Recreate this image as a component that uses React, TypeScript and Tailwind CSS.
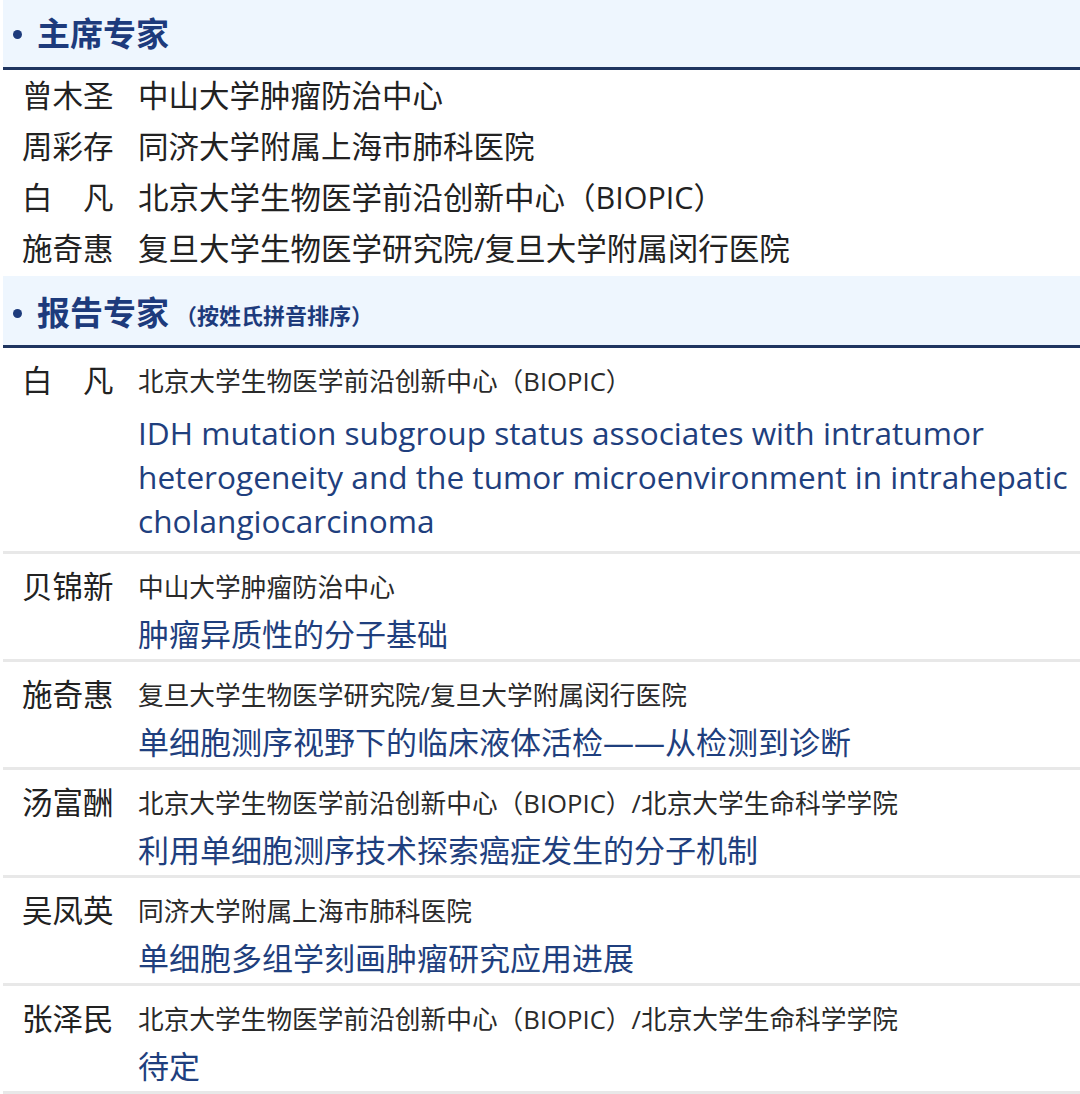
import React from "react";

const chairs = [
  { name: "曾木圣", org: "中山大学肿瘤防治中心" },
  { name: "周彩存", org: "同济大学附属上海市肺科医院" },
  { name: "白　凡", org: "北京大学生物医学前沿创新中心（BIOPIC）" },
  { name: "施奇惠", org: "复旦大学生物医学研究院/复旦大学附属闵行医院" },
];

const speakers: { name: string; org: string; title: string[]; en?: boolean }[] = [
  {
    name: "白　凡",
    org: "北京大学生物医学前沿创新中心（BIOPIC）",
    title: [
      "IDH mutation subgroup status associates with intratumor",
      "heterogeneity and the tumor microenvironment in intrahepatic",
      "cholangiocarcinoma",
    ],
    en: true,
  },
  { name: "贝锦新", org: "中山大学肿瘤防治中心", title: ["肿瘤异质性的分子基础"] },
  {
    name: "施奇惠",
    org: "复旦大学生物医学研究院/复旦大学附属闵行医院",
    title: ["单细胞测序视野下的临床液体活检——从检测到诊断"],
  },
  {
    name: "汤富酬",
    org: "北京大学生物医学前沿创新中心（BIOPIC）/北京大学生命科学学院",
    title: ["利用单细胞测序技术探索癌症发生的分子机制"],
  },
  { name: "吴凤英", org: "同济大学附属上海市肺科医院", title: ["单细胞多组学刻画肿瘤研究应用进展"] },
  {
    name: "张泽民",
    org: "北京大学生物医学前沿创新中心（BIOPIC）/北京大学生命科学学院",
    title: ["待定"],
  },
];

function SectionHeader({ title, note, h }: { title: string; note?: string; h: string }) {
  return (
    <div className="ml-[3px]">
      <div className={`${h} bg-[#eef6fe] flex items-center pl-[10px] text-[#1d3b7c] font-bold`}>
        <span className="w-[9px] h-[9px] rounded-full bg-[#1d3b7c] mr-[15px] mt-[2px]" />
        <span className="text-[33px] leading-none">{title}</span>
        {note && <span className="ml-[6px] text-[22px] mt-[6px]">{note}</span>}
      </div>
      <div className="h-[3px] bg-[#1f3560]" />
    </div>
  );
}

export default function App() {
  return (
    <div
      className="w-[1080px] h-[1094px] bg-white overflow-hidden"
      style={{ fontFamily: '"Open Sans", "Noto Sans CJK SC", sans-serif' }}
    >
      <SectionHeader title="主席专家" h="h-[67px]" />
      <div className="flex flex-col">
        {chairs.map((c) => (
          <div key={c.name} className="flex items-center h-[51px] text-[30.5px] text-[#222]">
            <span className="w-[138px] pl-[22px] shrink-0">{c.name}</span>
            <span>{c.org}</span>
          </div>
        ))}
      </div>

      <div className="mt-[2px]">
        <SectionHeader title="报告专家" note="（按姓氏拼音排序）" h="h-[69px] pt-[4px]" />
      </div>

      <div className="flex flex-col">
        {speakers.map((s, i) => (
          <div key={i}>
            <div className={`flex pt-[12px] ${s.en ? "pb-[8px]" : "pb-[3px]"}`}>
              <div className="w-[138px] pl-[22px] shrink-0 text-[30.5px] leading-[40px] text-[#222]">{s.name}</div>
              <div className="flex flex-col">
                <div className="pt-[2px] text-[25.7px] leading-[40px] h-[40px] text-[#2a2a2a] whitespace-nowrap">{s.org}</div>
                <div
                  className={`${s.en ? "mt-[11px] text-[31.6px]" : "mt-[6px] text-[31px]"} leading-[44px] text-[#1f3f7e] whitespace-nowrap`}
                >
                  {s.title.map((t, j) => (
                    <div key={j}>{t}</div>
                  ))}
                </div>
              </div>
            </div>
            <div className="ml-[3px] h-[3px] bg-[#e8e8e8]" />
          </div>
        ))}
      </div>
    </div>
  );
}
